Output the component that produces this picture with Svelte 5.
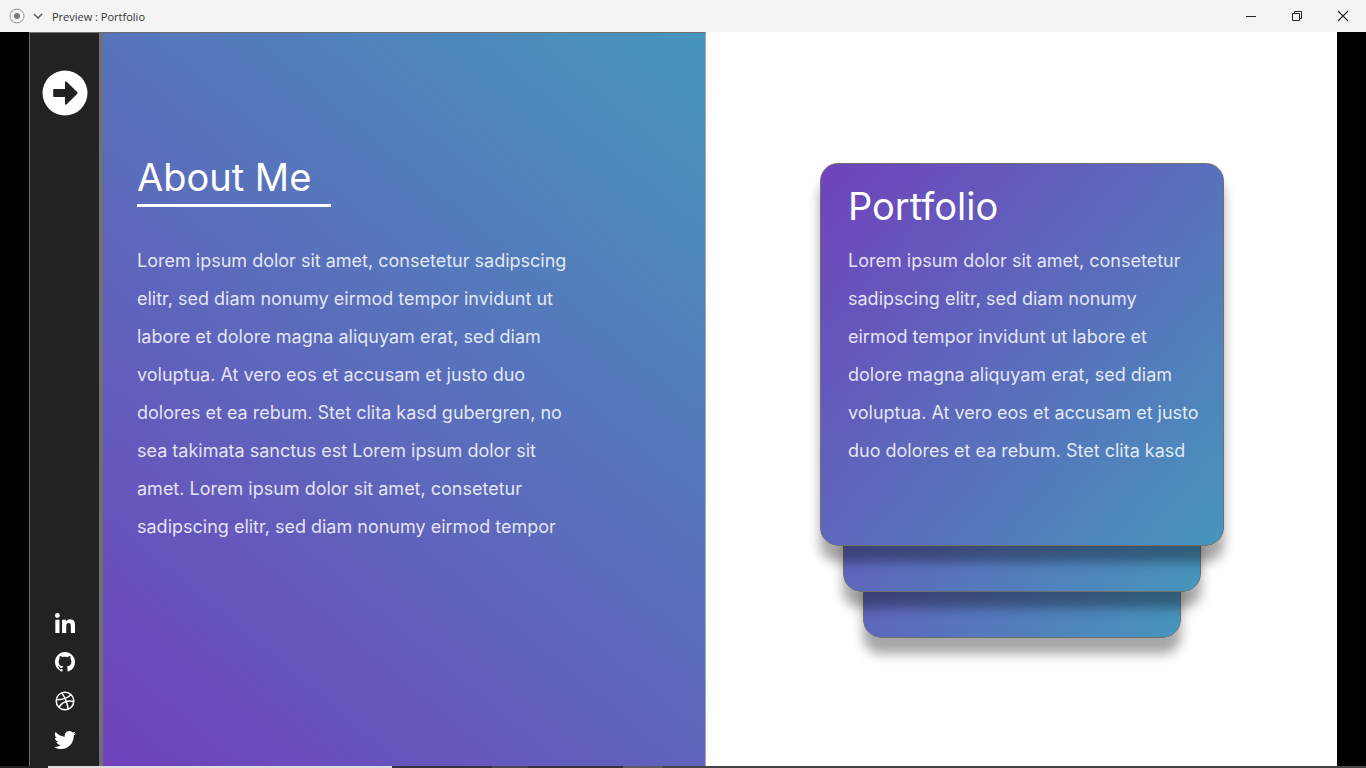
<script>
  const about = [
    'Lorem ipsum dolor sit amet, consetetur sadipscing',
    'elitr, sed diam nonumy eirmod tempor invidunt ut',
    'labore et dolore magna aliquyam erat, sed diam',
    'voluptua. At vero eos et accusam et justo duo',
    'dolores et ea rebum. Stet clita kasd gubergren, no',
    'sea takimata sanctus est Lorem ipsum dolor sit',
    'amet. Lorem ipsum dolor sit amet, consetetur',
    'sadipscing elitr, sed diam nonumy eirmod tempor'
  ];
  const portfolio = [
    'Lorem ipsum dolor sit amet, consetetur',
    'sadipscing elitr, sed diam nonumy',
    'eirmod tempor invidunt ut labore et',
    'dolore magna aliquyam erat, sed diam',
    'voluptua. At vero eos et accusam et justo',
    'duo dolores et ea rebum. Stet clita kasd'
  ];
</script>

<div class="window">
  <header class="titlebar">
    <svg class="record" viewBox="0 0 16 16" aria-hidden="true">
      <circle cx="8" cy="8" r="7" fill="none" stroke="#999" />
      <circle cx="8" cy="8" r="3" fill="#777" />
    </svg>
    <button class="more" aria-label="Menu">
      <svg width="10" height="8" viewBox="0 0 10 8"><path d="M1 2l4 4 4-4" fill="none" stroke="#666" stroke-width="1.6" /></svg>
    </button>
    <span class="title">Preview : Portfolio</span>
    <div class="controls">
      <button aria-label="Minimize">
        <svg width="12" height="12" viewBox="0 0 12 12"><path d="M1 6.5h10" stroke="#222" /></svg>
      </button>
      <button aria-label="Restore">
        <svg width="12" height="12" viewBox="0 0 12 12" fill="none" stroke="#222"><path d="M1.500 3.500h7v7h-7zM3.500 3.500v-2h7v7h-2" /></svg>
      </button>
      <button aria-label="Close">
        <svg width="12" height="12" viewBox="0 0 12 12"><path d="M1 1l10 10M11 1L1 11" stroke="#222" stroke-width="1.1" /></svg>
      </button>
    </div>
  </header>

  <main class="stage">
    <nav class="sidebar">
      <a class="next" href="#next" aria-label="Next">
        <svg width="46" height="46" viewBox="0 0 46 46">
          <circle cx="23" cy="23" r="22.500" fill="#fff" />
          <path d="M12 19h11v-6.600q0-2 1.700-.7l10.400 10.300q.9 1 0 2L24.700 34.300q-1.700 1.300-1.700-.7V27H12q-.8 0-.8-.8v-6.400q0-.8.8-.8z" fill="#222" />
        </svg>
      </a>
      <div class="social">
        <a href="#linkedin" aria-label="LinkedIn">
          <svg width="20" height="20" viewBox="0 0 448 448"><path d="M100.280 448H7.400V148.900h92.880zM53.790 108.100C24.090 108.100 0 83.500 0 53.800a53.790 53.790 0 0 1 107.580 0c0 29.700-24.100 54.300-53.790 54.300zM447.900 448h-92.680V302.400c0-34.700-.7-79.200-48.290-79.200-48.290 0-55.690 37.700-55.690 76.700V448h-92.780V148.900h89.080v40.800h1.300c12.400-23.500 42.690-48.300 87.880-48.300 94 0 111.280 61.900 111.280 142.300V448z" /></svg>
        </a>
        <a href="#github" aria-label="GitHub">
          <svg width="20" height="20" viewBox="0 0 16 16"><path d="M8 0C3.580 0 0 3.580 0 8c0 3.540 2.290 6.530 5.470 7.590.4.070.55-.17.55-.38 0-.19-.01-.82-.01-1.490-2.010.37-2.530-.49-2.690-.94-.09-.23-.48-.94-.82-1.130-.28-.15-.68-.52-.01-.53.63-.01 1.080.58 1.230.82.72 1.210 1.870.87 2.330.66.07-.52.28-.87.51-1.070-1.780-.2-3.640-.89-3.640-3.950 0-.87.31-1.590.82-2.150-.08-.2-.36-1.020.08-2.120 0 0 .67-.21 2.200.82.64-.18 1.320-.27 2-.27s1.360.09 2 .27c1.530-1.040 2.200-.82 2.200-.82.44 1.100.16 1.920.08 2.120.51.56.82 1.270.82 2.150 0 3.070-1.870 3.750-3.650 3.950.29.25.54.73.54 1.480 0 1.070-.01 1.930-.01 2.200 0 .21.15.46.55.38A8.010 8.010 0 0 0 16 8c0-4.420-3.580-8-8-8z" /></svg>
        </a>
        <a href="#dribbble" aria-label="Dribbble">
          <svg width="20" height="20" viewBox="0 0 20 20"><g fill="none" stroke="#fff" stroke-width="1.500"><circle cx="10" cy="10" r="8.800" /><path d="M6.700 1.900C9.800 6 12 10.800 13.200 18M1.300 8.700c6 .1 11-.9 14.700-5.200M3.900 16.400c2.800-5 7.600-7.500 14.900-5.900" /></g></svg>
        </a>
        <a href="#twitter" aria-label="Twitter">
          <svg width="22" height="20" viewBox="0 30 512 450"><path d="M459.370 151.716c.325 4.548.325 9.097.325 13.645 0 138.720-105.583 298.558-298.558 298.558-59.452 0-114.680-17.219-161.137-47.106 8.447.974 16.568 1.299 25.340 1.299 49.055 0 94.213-16.568 130.274-44.832-46.132-.975-84.792-31.188-98.112-72.772 6.498.974 12.995 1.624 19.818 1.624 9.421 0 18.843-1.300 27.614-3.573-48.081-9.747-84.143-51.980-84.143-102.985v-1.299c13.969 7.797 30.214 12.670 47.431 13.319-28.264-18.843-46.781-51.005-46.781-87.391 0-19.492 5.197-37.360 14.294-52.954 51.655 63.675 129.300 105.258 216.365 109.807-1.624-7.797-2.599-15.918-2.599-24.040 0-57.828 46.782-104.934 104.934-104.934 30.213 0 57.502 12.670 76.670 33.137 23.715-4.548 46.456-13.320 66.599-25.340-7.798 24.366-24.366 44.833-46.132 57.827 21.117-2.273 41.584-8.122 60.426-16.243-14.292 20.791-32.161 39.308-52.628 54.253z" /></svg>
        </a>
      </div>
    </nav>

    <section class="about">
      <h1>About Me</h1>
      <p>{#each about as line}<span>{line}</span>{/each}</p>
    </section>

    <section class="work">
      <div class="stack">
        <div class="card back"></div>
        <div class="card middle"></div>
        <article class="card front">
          <h2>Portfolio</h2>
          <p>{#each portfolio as line}<span>{line}</span>{/each}</p>
        </article>
      </div>
    </section>
  </main>
  <div class="taskbar"></div>
</div>

<style>
  :global(body) {
    margin: 0;
    background: #000;
  }
  .window {
    min-height: 100vh;
    display: flex;
    flex-direction: column;
    font-family: Inter, "Open Sans", sans-serif;
  }
  .titlebar {
    height: 32px;
    display: flex;
    align-items: center;
    padding-left: 9px;
    background: #f4f4f4;
    color: #333;
    font: 11px/16px "Open Sans", "Noto Sans", sans-serif;
  }
  .title {
    padding-top: 1px;
  }
  .record {
    width: 16px;
    height: 16px;
  }
  button {
    border: 0;
    padding: 0;
    background: none;
    display: grid;
    place-items: center;
  }
  .more {
    width: 10px;
    margin: 0 9px 0 8px;
  }
  .controls {
    margin-left: auto;
    display: flex;
  }
  .controls button {
    width: 46px;
    height: 32px;
  }
  .stage {
    flex: 1;
    display: grid;
    grid-template-columns: 74px 603fr 631fr;
    margin: 0 29px;
  }
  .sidebar {
    display: flex;
    flex-direction: column;
    align-items: center;
    justify-content: space-between;
    padding: 37px 0 16px;
    background: #222;
    border: 1px solid #707070;
    border-right-width: 4px;
    border-bottom: 0;
  }
  .sidebar a {
    display: block;
    line-height: 0;
  }
  .social {
    display: flex;
    flex-direction: column;
    align-items: center;
    gap: 19px;
  }
  .social svg {
    fill: #fff;
  }
  .about {
    padding: 122px 34px 0;
    background: linear-gradient(40deg, #7042bc, #4696bc);
    border-top: 1px solid #707070;
    border-right: 1px solid #aaa;
  }
  h1,
  h2 {
    margin: 0;
    color: #fff;
    font-size: 38px;
    line-height: 44px;
    font-weight: 400;
  }
  h1 {
    width: 194px;
    padding-bottom: 5px;
    border-bottom: 3px solid #fff;
  }
  p {
    margin: 0;
    color: rgba(255, 255, 255, 0.85);
    font-size: 18px;
    line-height: 38px;
    white-space: nowrap;
  }
  p span {
    display: block;
  }
  .about p {
    margin-top: 35px;
  }
  .work {
    display: grid;
    place-items: center;
    padding-top: 3px;
    background: #fff;
  }
  .stack {
    display: grid;
    width: 403px;
  }
  .card {
    grid-area: 1 / 1;
    box-sizing: border-box;
    border: 1px solid #707070;
    border-radius: 18px;
    background: linear-gradient(130deg, #7042bc, #4696bc) border-box;
    box-shadow: 0 16px 12px rgba(0, 0, 0, 0.35);
  }
  .front {
    margin-bottom: 92px;
    padding: 20px 24px 75px 27px;
  }
  .front p {
    margin-top: 14px;
  }
  .middle {
    margin: 80px 23px 46px;
  }
  .back {
    margin: 160px 43px 0;
  }
  .taskbar {
    height: 2px;
    background: linear-gradient(to right, #222 48px, #ddd 48px 392px, #35333f 392px 492px, #4a4855 492px 528px, #35333f 528px 623px, #5d5b63 623px 663px, #444 663px);
  }
</style>
